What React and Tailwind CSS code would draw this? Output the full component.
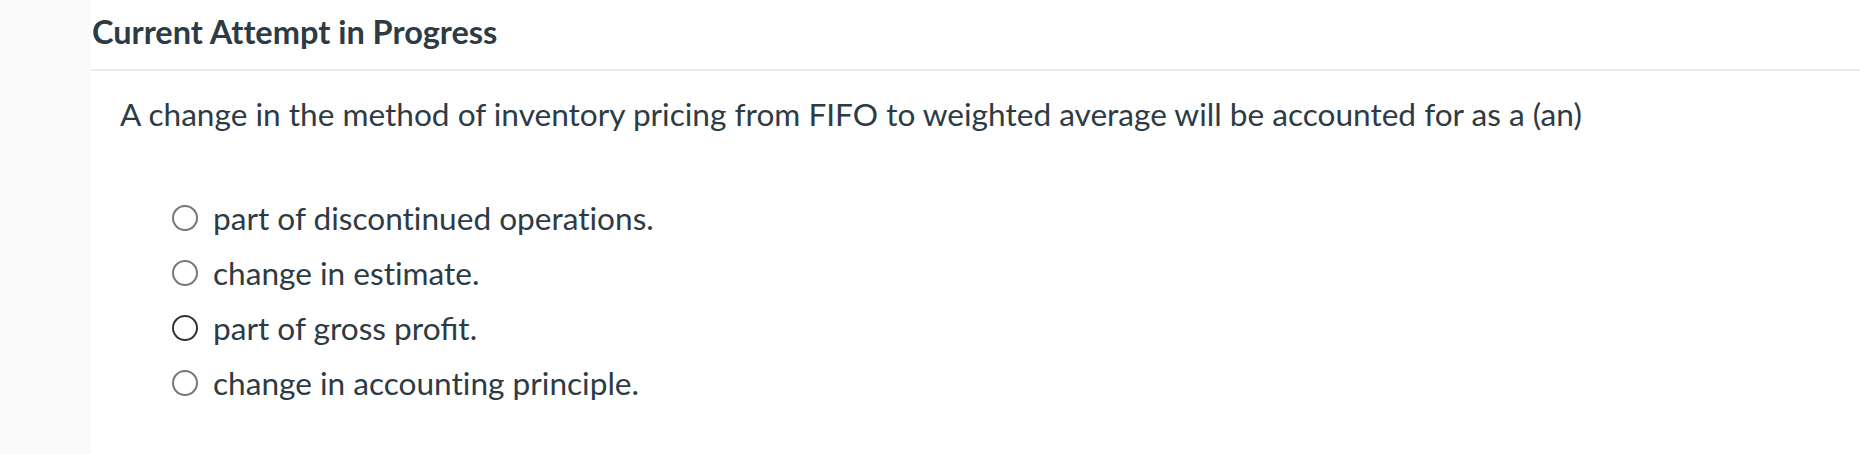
export default function App() {
  const options = [
    { label: 'part of discontinued operations.', dark: false },
    { label: 'change in estimate.', dark: false },
    { label: 'part of gross profit.', dark: true },
    { label: 'change in accounting principle.', dark: false },
  ]

  return (
    <div className="flex h-[454px] w-full bg-white text-[#2d3b45] [font-variant-ligatures:no-common-ligatures]" style={{ fontFamily: 'Lato, "Noto Sans", sans-serif' }}>
      <div className="w-[91px] shrink-0 bg-[#fafafa]" />
      <div className="flex-1">
        <div className="flex h-[71px] items-center border-b-2 border-[#ececec] pb-[4px] pl-px">
          <h1 className="text-[32.5px] font-bold leading-none">Current Attempt in Progress</h1>
        </div>
        <div className="pl-[29px] pt-[24px]">
          <p className="text-[31.6px] leading-[38px]">A change in the method of inventory pricing from FIFO to weighted average will be accounted for as a (an)</p>
          <div className="mt-[66px] flex flex-col gap-[17px] pl-[52px]">
            {options.map((o) => (
              <label key={o.label} className="flex items-center gap-[15px] text-[31.6px] leading-[38px]">
                <span className={`h-[26px] w-[26px] shrink-0 rounded-full border-2 ${o.dark ? 'border-[#333]' : 'border-[#777]'}`} />
                <span className={o.label.includes('profit') ? '[font-variant-ligatures:common-ligatures]' : ''}>{o.label}</span>
              </label>
            ))}
          </div>
        </div>
      </div>
    </div>
  )
}
